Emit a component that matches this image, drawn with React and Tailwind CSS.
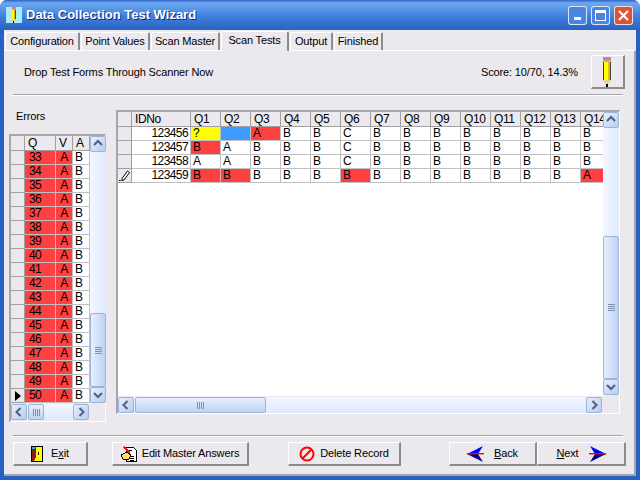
import React from "react";

const QS = ["Q1", "Q2", "Q3", "Q4", "Q5", "Q6", "Q7", "Q8", "Q9", "Q10", "Q11", "Q12", "Q13", "Q14"];

const rows = [
  { id: "123456", vals: ["?", "", "A", "B", "B", "C", "B", "B", "B", "B", "B", "B", "B", "B"], bg: { 0: "bg-[#ffff00]", 1: "bg-[#3f9cff]", 2: "bg-[#ff4040]" } },
  { id: "123457", vals: ["B", "A", "B", "B", "B", "C", "B", "B", "B", "B", "B", "B", "B", "B"], bg: { 0: "bg-[#ff4040]" } },
  { id: "123458", vals: ["A", "A", "B", "B", "B", "C", "B", "B", "B", "B", "B", "B", "B", "B"], bg: {} },
  { id: "123459", vals: ["B", "B", "B", "B", "B", "B", "B", "B", "B", "B", "B", "B", "B", "A"], bg: { 0: "bg-[#ff4040]", 1: "bg-[#ff4040]", 5: "bg-[#ff4040]", 13: "bg-[#ff4040]" } },
];

const errors = Array.from({ length: 18 }, (_, i) => 33 + i);

const Chevron = ({ dir }) => {
  const paths = {
    up: "M2 7 L6 3 L10 7",
    down: "M2 4 L6 8 L10 4",
    left: "M7.5 2 L3.5 6 L7.5 10",
    right: "M4.5 2 L8.5 6 L4.5 10",
  };
  return (
    <svg width="12" height="12" viewBox="0 0 12 12">
      <path d={paths[dir]} fill="none" stroke="#4d6185" strokeWidth="2" />
    </svg>
  );
};

const ScrollBtn = ({ dir }) => (
  <div className="w-[16px] h-[16px] shrink-0 flex items-center justify-center rounded-[2px] border border-[#9db4d8] bg-[linear-gradient(135deg,#e6effd,#b9cdf0)]">
    <Chevron dir={dir} />
  </div>
);

const Grip = ({ vertical }) => (
  <div className={vertical ? "flex flex-col gap-px" : "flex gap-px"}>
    {[0, 1, 2, 3].map((i) => (
      <div key={i} className={vertical ? "w-[7px] h-px bg-[#7d90b0]" : "w-px h-[7px] bg-[#7d90b0]"} />
    ))}
  </div>
);

const VScroll = ({ before, thumb }) => (
  <div className="w-[16px] shrink-0 flex flex-col bg-[linear-gradient(90deg,#f2f7ff,#dfeafd)]">
    <ScrollBtn dir="up" />
    <div style={{ height: before }} />
    <div
      style={{ height: thumb }}
      className="rounded-[2px] border border-[#9db4d8] flex items-center justify-center bg-[linear-gradient(90deg,#e6effd,#c0d2f2)]"
    >
      <Grip vertical />
    </div>
    <ScrollBtn dir="down" />
  </div>
);

const HScroll = ({ thumb, width }) => (
  <div style={{ width }} className="h-[16px] flex bg-[linear-gradient(180deg,#f2f7ff,#dfeafd)]">
    <ScrollBtn dir="left" />
    <div
      style={{ width: thumb }}
      className="ml-px rounded-[2px] border border-[#9db4d8] flex items-center justify-center bg-[linear-gradient(180deg,#e6effd,#c0d2f2)]"
    >
      <Grip />
    </div>
    <div className="flex-1" />
    <ScrollBtn dir="right" />
  </div>
);

const HeadCell = ({ w, children }) => (
  <div
    style={{ width: w }}
    className="shrink-0 h-full pl-[3px] border-r border-b border-[#a0a0a0] bg-[#ebe9ed] text-[12px] tracking-[-0.4px] leading-[14px] overflow-hidden whitespace-nowrap"
  >
    {children}
  </div>
);

const Cell = ({ w, className = "", children }) => (
  <div
    style={{ width: w }}
    className={`shrink-0 h-full px-[2px] border-r border-b border-[#c0c0c0] text-[12px] tracking-[-0.6px] leading-[13px] overflow-hidden whitespace-nowrap ${className}`}
  >
    {children}
  </div>
);

const Sep = ({ className = "" }) => (
  <div className={`w-[610px] ml-[9px] h-[2px] bg-[#a8a6aa] border-b border-white ${className}`} />
);

const WinButton = ({ className = "", children }) => (
  <div
    className={`h-[24px] flex items-center justify-center gap-[5px] bg-[#ebe9ed] border-t border-l border-white border-r-2 border-b-2 border-r-[#8c8c8c] border-b-[#8c8c8c] ${className}`}
  >
    {children}
  </div>
);

const Pencil = ({ w = 11, h = 30 }) => (
  <svg width={w} height={h} viewBox="0 0 11 30" shapeRendering="crispEdges">
    <rect x="1" y="0" width="8" height="3" fill="#e870a8" />
    <rect x="1" y="3" width="8" height="2" fill="#b0b0b0" />
    <rect x="1" y="5" width="8" height="18" fill="#ffff00" />
    <rect x="1" y="5" width="1" height="18" fill="#404040" />
    <rect x="8" y="5" width="1" height="18" fill="#404040" />
    <rect x="6" y="5" width="2" height="18" fill="#e0c000" />
    <path d="M1 23 H9 L6 28 H4 Z" fill="#e8d0a0" />
    <rect x="4" y="27" width="2" height="3" fill="#000" />
  </svg>
);

const ExitIcon = () => (
  <svg width="12" height="16" viewBox="0 0 12 16" shapeRendering="crispEdges">
    <rect width="12" height="16" fill="#000" />
    <rect x="1" y="1" width="10" height="14" fill="#ffff00" />
    <path d="M1 1 H5 V11 L3 15 H1 Z" fill="#8c1c1c" />
    <rect x="1" y="1" width="3" height="2" fill="#20c0d0" />
    <rect x="7" y="6" width="1" height="3" fill="#000" />
  </svg>
);

const EditIcon = () => (
  <svg width="16" height="16" viewBox="0 0 16 16" shapeRendering="crispEdges">
    <path d="M5 1 H12 L15 4 V15 H5 Z" fill="#fff" stroke="#000" strokeWidth="1" />
    <path d="M7 4 H11 M7 10 H13 M7 12 H13 M9 14 H13" stroke="#000" strokeWidth="1" />
    <path d="M3 1 L9 7" stroke="#e02020" strokeWidth="1.5" />
    <path d="M0 9 L6 6 L10 9 L8 13 H2 Z" fill="#ffe060" stroke="#000" strokeWidth="1" />
  </svg>
);

const NoIcon = () => (
  <svg width="16" height="16" viewBox="0 0 16 16">
    <circle cx="8" cy="8" r="6.5" fill="none" stroke="#ff0000" strokeWidth="2" />
    <path d="M3.5 12.5 L12.5 3.5" stroke="#ff0000" strokeWidth="2" />
  </svg>
);

const Arrow = ({ flip }) => (
  <svg width="17" height="16" viewBox="0 0 17 16" className={flip ? "-scale-x-100" : ""}>
    <path d="M0 8 L16 0 L11 8 Z" fill="#0000ff" />
    <path d="M0 8 L16 16 L11 8 Z" fill="#000080" />
    <rect x="0" y="7" width="17" height="1.4" fill="#ff0000" />
  </svg>
);

const RowPencil = () => (
  <svg width="12" height="12" viewBox="0 0 12 12">
    <path d="M8.5 1 L10.5 2.5 L5 10 L3 10.5 L3 8.5 Z" fill="#fff" stroke="#000" strokeWidth="1" />
    <rect x="0" y="10" width="1" height="1" fill="#000" />
    <rect x="1.5" y="10" width="1" height="1" fill="#000" />
  </svg>
);

const tabs = [
  { label: "Configuration", w: 75 },
  { label: "Point Values", w: 69 },
  { label: "Scan Master", w: 69 },
  { label: "Scan Tests", w: 68, active: true },
  { label: "Output", w: 43 },
  { label: "Finished", w: 49 },
];

export default function App() {
  return (
    <div className="w-[640px] h-[480px] flex flex-col overflow-hidden rounded-t-[7px] bg-[#2a5fc4] text-[11px] tracking-[-0.14px] text-black font-['Liberation_Sans',Arial,sans-serif]">
      <div className="h-[30px] shrink-0 flex items-center pl-[6px] pr-[7px] bg-[linear-gradient(180deg,#2f62c8_0%,#6ea8ee_10%,#5c9bea_25%,#3f7fdc_55%,#2a62c2_100%)]">
        <div className="w-[16px] h-[16px] flex justify-center bg-[#a8ecf4]">
          <Pencil w={6} h={16} />
        </div>
        <div className="ml-[4px] text-[13px] tracking-normal font-bold text-white [text-shadow:1px_1px_0_#0a2a80]">Data Collection Test Wizard</div>
        <div className="ml-auto flex gap-[4px]">
          <div className="w-[19px] h-[19px] rounded-[3px] border border-white/80 bg-[#4a86e0] flex items-end pl-[5px] pb-[4px]">
            <div className="w-[7px] h-[3px] bg-white" />
          </div>
          <div className="w-[19px] h-[19px] rounded-[3px] border border-white/80 bg-[#4a86e0] flex items-center justify-center">
            <div className="w-[11px] h-[11px] border border-t-[3px] border-white" />
          </div>
          <div className="w-[19px] h-[19px] rounded-[3px] border border-white/80 bg-[#d8543a] flex items-center justify-center">
            <svg width="11" height="11" viewBox="0 0 11 11">
              <path d="M1 1 L10 10 M10 1 L1 10" stroke="#fff" strokeWidth="2.2" />
            </svg>
          </div>
        </div>
      </div>

      <div className="flex-1 mx-[4px] mb-[4px] flex flex-col bg-[#ebe9ed]">
        <div className="h-[20px] shrink-0 flex items-end pl-px gap-px">
          {tabs.map((t) => (
            <div
              key={t.label}
              style={{ width: t.w }}
              className={
                t.active
                  ? "relative z-10 h-[20px] -mb-px text-center whitespace-nowrap leading-[16px] bg-[#ebe9ed] border-t border-l border-white border-r-2 border-r-[#8c8c8c] rounded-t-[2px]"
                  : "h-[18px] text-center whitespace-nowrap leading-[17px] bg-[#ebe9ed] border-t border-l border-white border-r-2 border-r-[#8c8c8c] rounded-t-[2px]"
              }
            >
              {t.label}
            </div>
          ))}
        </div>

        <div className="flex-1 flex flex-col border-t border-white border-r-2 border-r-[#a8a6aa] border-b-2 border-b-[#a8a6aa]">
          <div className="mt-[4px] h-[34px] shrink-0 flex items-center pl-[20px] pr-[9px]">
            <div>Drop Test Forms Through Scanner Now</div>
            <div className="ml-auto">Score: 10/70, 14.3%</div>
            <div className="ml-[13px] w-[34px] h-[34px] flex items-center justify-center bg-[#ebe9ed] border-t border-l border-white border-r-2 border-b-2 border-r-[#8c8c8c] border-b-[#8c8c8c]">
              <Pencil />
            </div>
          </div>

          <Sep className="mt-[5px]" />

          <div className="mt-[14px] h-[314px] shrink-0 flex items-start pl-[5px]">
            <div className="w-[97px] shrink-0">
              <div className="ml-[7px] -mt-px h-[25px] leading-[14px]">Errors</div>
              <div className="h-[288px] border-t-2 border-l-2 border-[#a8a6aa] border-r border-b border-r-white border-b-white flex flex-col">
                <div className="flex">
                  <div className="w-[79px] shrink-0">
                    <div className="h-[15px] flex">
                      <HeadCell w={14} />
                      <HeadCell w={31}>Q</HeadCell>
                      <HeadCell w={17}>V</HeadCell>
                      <HeadCell w={17}>A</HeadCell>
                    </div>
                    {errors.map((n) => (
                      <div key={n} className="h-[14px] flex bg-white">
                        <div className="w-[14px] shrink-0 h-full flex items-center justify-center bg-[#ebe9ed] border-r border-b border-[#a0a0a0]">
                          {n === 50 && <div className="w-0 h-0 border-y-[5px] border-y-transparent border-l-[6px] border-l-black" />}
                        </div>
                        <Cell w={31} className="bg-[#ff4040] pl-[4px]">{n}</Cell>
                        <Cell w={17} className="bg-[#ff4040] text-center">A</Cell>
                        <Cell w={17}>B</Cell>
                      </div>
                    ))}
                  </div>
                  <VScroll before={161} thumb={74} />
                </div>
                <div className="mt-px flex">
                  <HScroll thumb={16} width={78} />
                </div>
              </div>
            </div>

            <div className="ml-[10px] w-[504px] h-[304px] shrink-0 border-t-2 border-l-2 border-[#a8a6aa] border-r border-b border-r-white border-b-white flex flex-col">
              <div className="h-[285px] flex">
                <div className="w-[485px] shrink-0 overflow-hidden bg-white">
                  <div className="w-[640px]">
                    <div className="h-[15px] flex">
                      <HeadCell w={14} />
                      <HeadCell w={59}>IDNo</HeadCell>
                      {QS.map((q) => (
                        <HeadCell key={q} w={30}>{q}</HeadCell>
                      ))}
                    </div>
                    {rows.map((r, ri) => (
                      <div key={r.id} className="h-[14px] flex">
                        <div className="w-[14px] shrink-0 h-full flex items-center justify-center bg-[#ebe9ed] border-r border-b border-[#a0a0a0]">
                          {ri === 3 && <RowPencil />}
                        </div>
                        <Cell w={59} className="text-right">{r.id}</Cell>
                        {r.vals.map((v, i) => (
                          <Cell key={i} w={30} className={r.bg[i] || ""}>{v}</Cell>
                        ))}
                      </div>
                    ))}
                  </div>
                </div>
                <div className="flex">
                  <VScroll before={108} thumb={143} />
                </div>
              </div>
              <div className="mt-px flex">
                <HScroll thumb={131} width={484} />
              </div>
            </div>
          </div>

          <Sep className="mt-[11px]" />

          <div className="mt-[5px] flex pl-[9px]">
            <WinButton className="w-[75px] gap-[8px]">
              <ExitIcon />
              <span>E<span className="underline">x</span>it</span>
            </WinButton>
            <WinButton className="w-[137px] ml-[24px]">
              <EditIcon />
              Edit Master Answers
            </WinButton>
            <WinButton className="w-[113px] ml-[39px]">
              <NoIcon />
              Delete Record
            </WinButton>
            <WinButton className="w-[88px] ml-[48px] gap-[10px]">
              <Arrow />
              <span><span className="underline">B</span>ack</span>
            </WinButton>
            <WinButton className="w-[89px] gap-[10px]">
              <span><span className="underline">N</span>ext</span>
              <Arrow flip />
            </WinButton>
          </div>
        </div>
      </div>
    </div>
  );
}
